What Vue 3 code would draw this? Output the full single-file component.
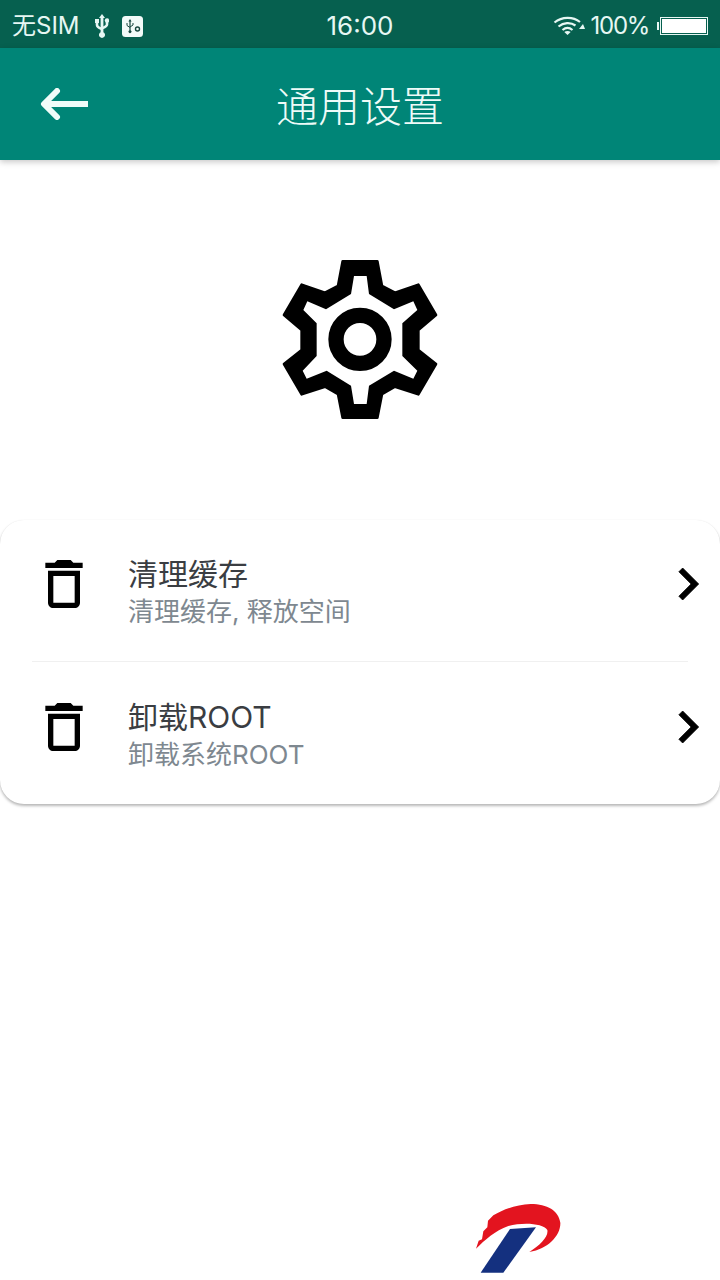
<script setup>
const rows = [
  { title: '清理缓存', sub: '清理缓存, 释放空间' },
  { title: '卸载ROOT', sub: '卸载系统ROOT' },
]
</script>

<template>
  <div class="page">
    <div class="status">
      <div class="st-left">
        <span class="st-text">无SIM</span>
        <svg class="usb" width="14" height="24" viewBox="0 0 14 24">
          <path d="M7 0l3 4H8.400v14.300a3 3 0 1 1-2.800 0V4H4z" fill="#e6f7f3"/>
          <path d="M2 8v3c0 1.800 1.400 2.600 4.500 3.800M12 8v2.500c0 1.600-1.400 2.400-4.500 3.500" fill="none" stroke="#e6f7f3" stroke-width="2.600"/>
          <rect x="0" y="5" width="4" height="4" fill="#e6f7f3"/>
          <circle cx="12" cy="6.500" r="2.200" fill="#e6f7f3"/>
        </svg>
        <svg class="usbset" width="21" height="21" viewBox="0 0 21 21">
          <rect width="21" height="21" rx="3.500" fill="#f2fbf9"/>
          <path d="M8 3l1.600 2.500H8.600v8.800a1.500 1.500 0 1 1-1.200 0V5.500H6.400z" fill="#17473f"/>
          <path d="M5 7v2.500l3 2M11 7v2l-3 2" fill="none" stroke="#17473f" stroke-width="1"/>
          <circle cx="15.500" cy="13" r="2" fill="none" stroke="#17473f" stroke-width="1.400"/>
        </svg>
      </div>
      <span class="st-time">16:00</span>
      <div class="st-right">
        <svg width="32" height="20" viewBox="0 0 32 20">
          <path d="M1.500 6.500C9 .5 20 .5 27 6M5.500 10.500c5-4 12-4.500 17-1M9.500 14c3-2.500 7-2.500 10 0" fill="none" stroke="#e6f7f3" stroke-width="2.200"/>
          <path d="M14.500 19l-3.200-3c1.800-1.400 4.600-1.400 6.400 0z" fill="#e6f7f3"/>
          <path d="M26 13l4-5 2 5z" fill="#e6f7f3"/>
        </svg>
        <span class="st-text pct">100%</span>
        <span class="nub"></span>
        <span class="batt"><span class="fill"></span></span>
      </div>
    </div>

    <header class="bar">
      <svg class="back" width="48" height="32" viewBox="0 0 48 32">
        <path d="M48 16H6" fill="none" stroke="#effcf9" stroke-width="6"/>
        <path d="M17 3L4 16l13 13" fill="none" stroke="#effcf9" stroke-width="6" stroke-linecap="round" stroke-linejoin="round"/>
      </svg>
      <h1 class="title">通用设置</h1>
    </header>

    <div class="hero">
      <svg width="180" height="180" viewBox="0 0 540 540">
        <path fill="#000" stroke="#000" stroke-width="8" stroke-linejoin="round" d="M218 34H322L336 108 375 128 445 104 498 195 445 240V300L498 342 445 433 375 410 336 432 322 503H218L204 432 165 410 95 433 42 342 95 300V240L42 195 95 104 165 128 204 108z"/>
        <path fill="#fff" d="M252 78L243 132 168 178 112 154 100 180 140 220V318L98 362 110 386 170 362 243 407 252 462H290L297 407 372 362 430 386 442 362 397 318V220L442 180 430 154 372 178 297 132 290 78z"/>
        <circle cx="270" cy="268" r="72" fill="none" stroke="#000" stroke-width="46"/>
      </svg>
    </div>

    <section class="card">
      <div v-for="(r, i) in rows" :key="i" class="row">
        <svg class="ico" width="64" height="64" viewBox="0 0 24 24">
          <path d="M6 19c0 1.100.9 2 2 2h8c1.100 0 2-.9 2-2V7H6v12zM8 9h8v10H8V9zm7.500-5l-1-1h-5l-1 1H5v2h14V4h-3.500z" fill="#000"/>
        </svg>
        <div class="txt">
          <div class="t1">{{ r.title }}</div>
          <div class="t2">{{ r.sub }}</div>
        </div>
        <svg class="chev" width="64" height="64" viewBox="0 0 24 24">
          <path d="M10 6L8.590 7.410 13.170 12l-4.580 4.590L10 18l6-6z" fill="#000" stroke="#000" stroke-width=".3" stroke-linejoin="round"/>
        </svg>
      </div>
    </section>

    <footer class="foot">
      <svg class="logo" width="120" height="90" viewBox="0 0 360 270">
        <path d="M48 176L56 152 66 148 70 124 82 112 84 92 100 76C130 58 170 44 212 42 262 42 296 62 301 98 303 135 265 178 208 186 240 165 266 140 262 120 250 100 190 96 145 108 105 122 75 150 48 176z" fill="#e3141f"/>
        <path d="M150 117L228 112 130 248H62z" fill="#14307f"/>
      </svg>
    </footer>
  </div>
</template>

<style scoped>
.page {
  width: 720px;
  height: 1280px;
  background: #fff;
  display: flex;
  flex-direction: column;
  overflow: hidden;
  font-family: Inter, "Noto Sans CJK SC", sans-serif;
}
.status {
  flex: none;
  height: 48px;
  background: #06604f;
  display: grid;
  grid-template-columns: 1fr auto 1fr;
  align-items: center;
  color: #e6f7f3;
  padding: 0 12px;
  box-sizing: border-box;
}
.st-left, .st-right { display: flex; align-items: center; }
.st-right { justify-content: flex-end; }
.st-text { font-size: 24px; line-height: 48px; }
.st-time { font-size: 26px; line-height: 52px; }
.usb { margin-left: 15px; }
.usbset { margin-left: 13px; }
.pct { margin-left: 6px; letter-spacing: -1.3px; }
.nub { width: 2px; height: 8px; background: #e6f7f3; margin-left: 8px; }
.batt {
  width: 48px;
  height: 18px;
  margin-left: 1px;
  border: 1px solid #e6f7f3;
  box-sizing: border-box;
  padding: 1px;
  display: flex;
}
.fill { flex: 1; background: #fff; }
.bar {
  flex: none;
  height: 112px;
  background: #008577;
  display: flex;
  align-items: center;
  justify-content: center;
  position: relative;
  box-shadow: 0 2px 6px rgba(0, 0, 0, 0.22);
}
.back { position: absolute; left: 40px; top: 40px; }
.title {
  margin: 6px 0 0;
  font-size: 42px;
  font-weight: 300;
  color: #eefbf8;
  line-height: 1;
}
.hero {
  flex: none;
  height: 360px;
  display: flex;
  align-items: center;
  justify-content: center;
}
.card {
  flex: none;
  height: 284px;
  border-radius: 24px;
  background: #fff;
  box-shadow: 0 2px 3px rgba(0, 0, 0, 0.28), 0 0 1px rgba(0, 0, 0, 0.08);
  display: flex;
  flex-direction: column;
}
.row {
  height: 141px;
  display: flex;
  align-items: flex-start;
  padding: 32px 0 0 32px;
  box-sizing: border-box;
  position: relative;
}
.row:first-child { height: 143px; }
.row:first-child::after {
  content: "";
  position: absolute;
  left: 32px;
  right: 32px;
  bottom: 1px;
  height: 1px;
  background: #f0f0f0;
}
.ico { flex: none; }
.chev { flex: none; }
.txt { flex: 1; margin: 3px 0 0 32px; }
.t1 { font-size: 30px; line-height: 39px; color: #3a3d42; }
.t2 { font-size: 26px; line-height: 36px; color: #7e8890; }
.foot { flex: none; padding: 386px 0 0 460px; }
.logo { display: block; }
</style>
